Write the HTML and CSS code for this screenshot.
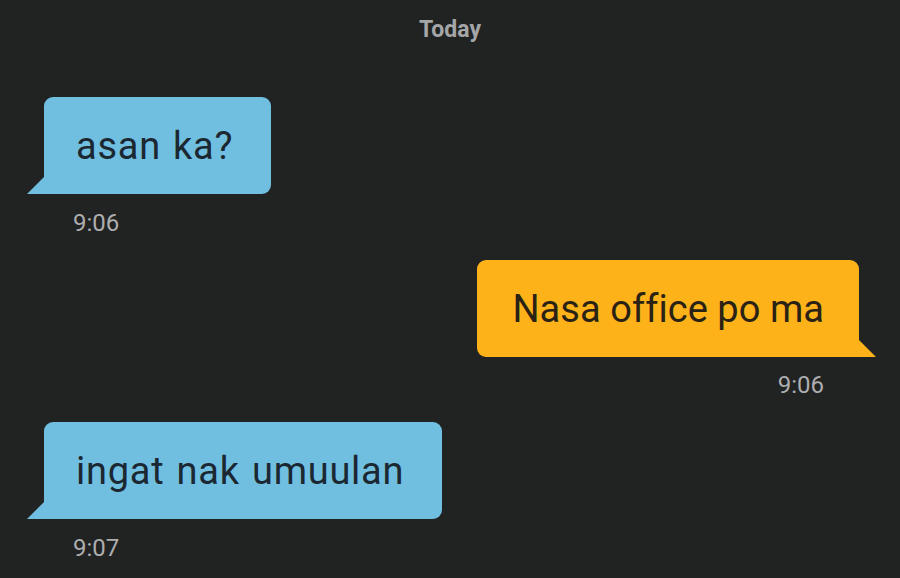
FILE: index.html
```html
<!DOCTYPE html>
<html>
<head>
<meta charset="utf-8">
<link rel="stylesheet" href="styles.css">
</head>
<body>
<div class="chat">
  <div class="day">Today</div>
  <div class="msg in first">
    <div class="bubble">asan ka?</div>
    <div class="time">9:06</div>
  </div>
  <div class="msg out">
    <div class="bubble">Nasa office po ma</div>
    <div class="time">9:06</div>
  </div>
  <div class="msg in">
    <div class="bubble">ingat nak umuulan</div>
    <div class="time">9:07</div>
  </div>
</div>
</body>
</html>
```
FILE: styles.css
```css
html, body {
  margin: 0;
  padding: 0;
  background: #212222;
}
body {
  width: 900px;
  height: 578px;
  overflow: hidden;
  font-family: Roboto, "Liberation Sans", sans-serif;
}
.chat {
  display: flex;
  flex-direction: column;
}
.day {
  height: 60px;
  line-height: 60px;
  text-align: center;
  font-weight: 700;
  font-size: 23px;
  color: #a5a6a7;
}
.msg {
  display: flex;
  flex-direction: column;
  margin-top: 22px;
}
.msg.first {
  margin-top: 37px;
}
.msg.in {
  align-items: flex-start;
  padding-left: 44px;
}
.msg.out {
  align-items: flex-end;
  padding-right: 41px;
}
.bubble {
  position: relative;
  height: 97px;
  display: flex;
  align-items: center;
  font-size: 38px;
  letter-spacing: 0.75px;
  word-spacing: 2px;
  padding: 0 38px 0 32px;
  border-radius: 9px;
}
.in .bubble {
  background: #70bfe1;
  color: #1b2731;
  border-bottom-left-radius: 0;
}
.out .bubble {
  background: #fdb219;
  color: #2a2214;
  padding: 0 35px;
  letter-spacing: 0.05px;
  word-spacing: 0;
  border-bottom-right-radius: 0;
}
.bubble::after {
  content: "";
  position: absolute;
  bottom: 0;
  width: 17px;
  height: 17px;
}
.in .bubble::after {
  left: -17px;
  background: #70bfe1;
  clip-path: polygon(100% 0, 100% 100%, 0 100%);
}
.out .bubble::after {
  right: -17px;
  background: #fdb219;
  clip-path: polygon(0 0, 100% 100%, 0 100%);
}
.time {
  margin-top: 14px;
  height: 30px;
  line-height: 30px;
  font-size: 24px;
  color: #adaeaf;
}
.in .time {
  padding-left: 29px;
}
.out .time {
  padding-right: 35px;
  margin-top: 13px;
}
```
